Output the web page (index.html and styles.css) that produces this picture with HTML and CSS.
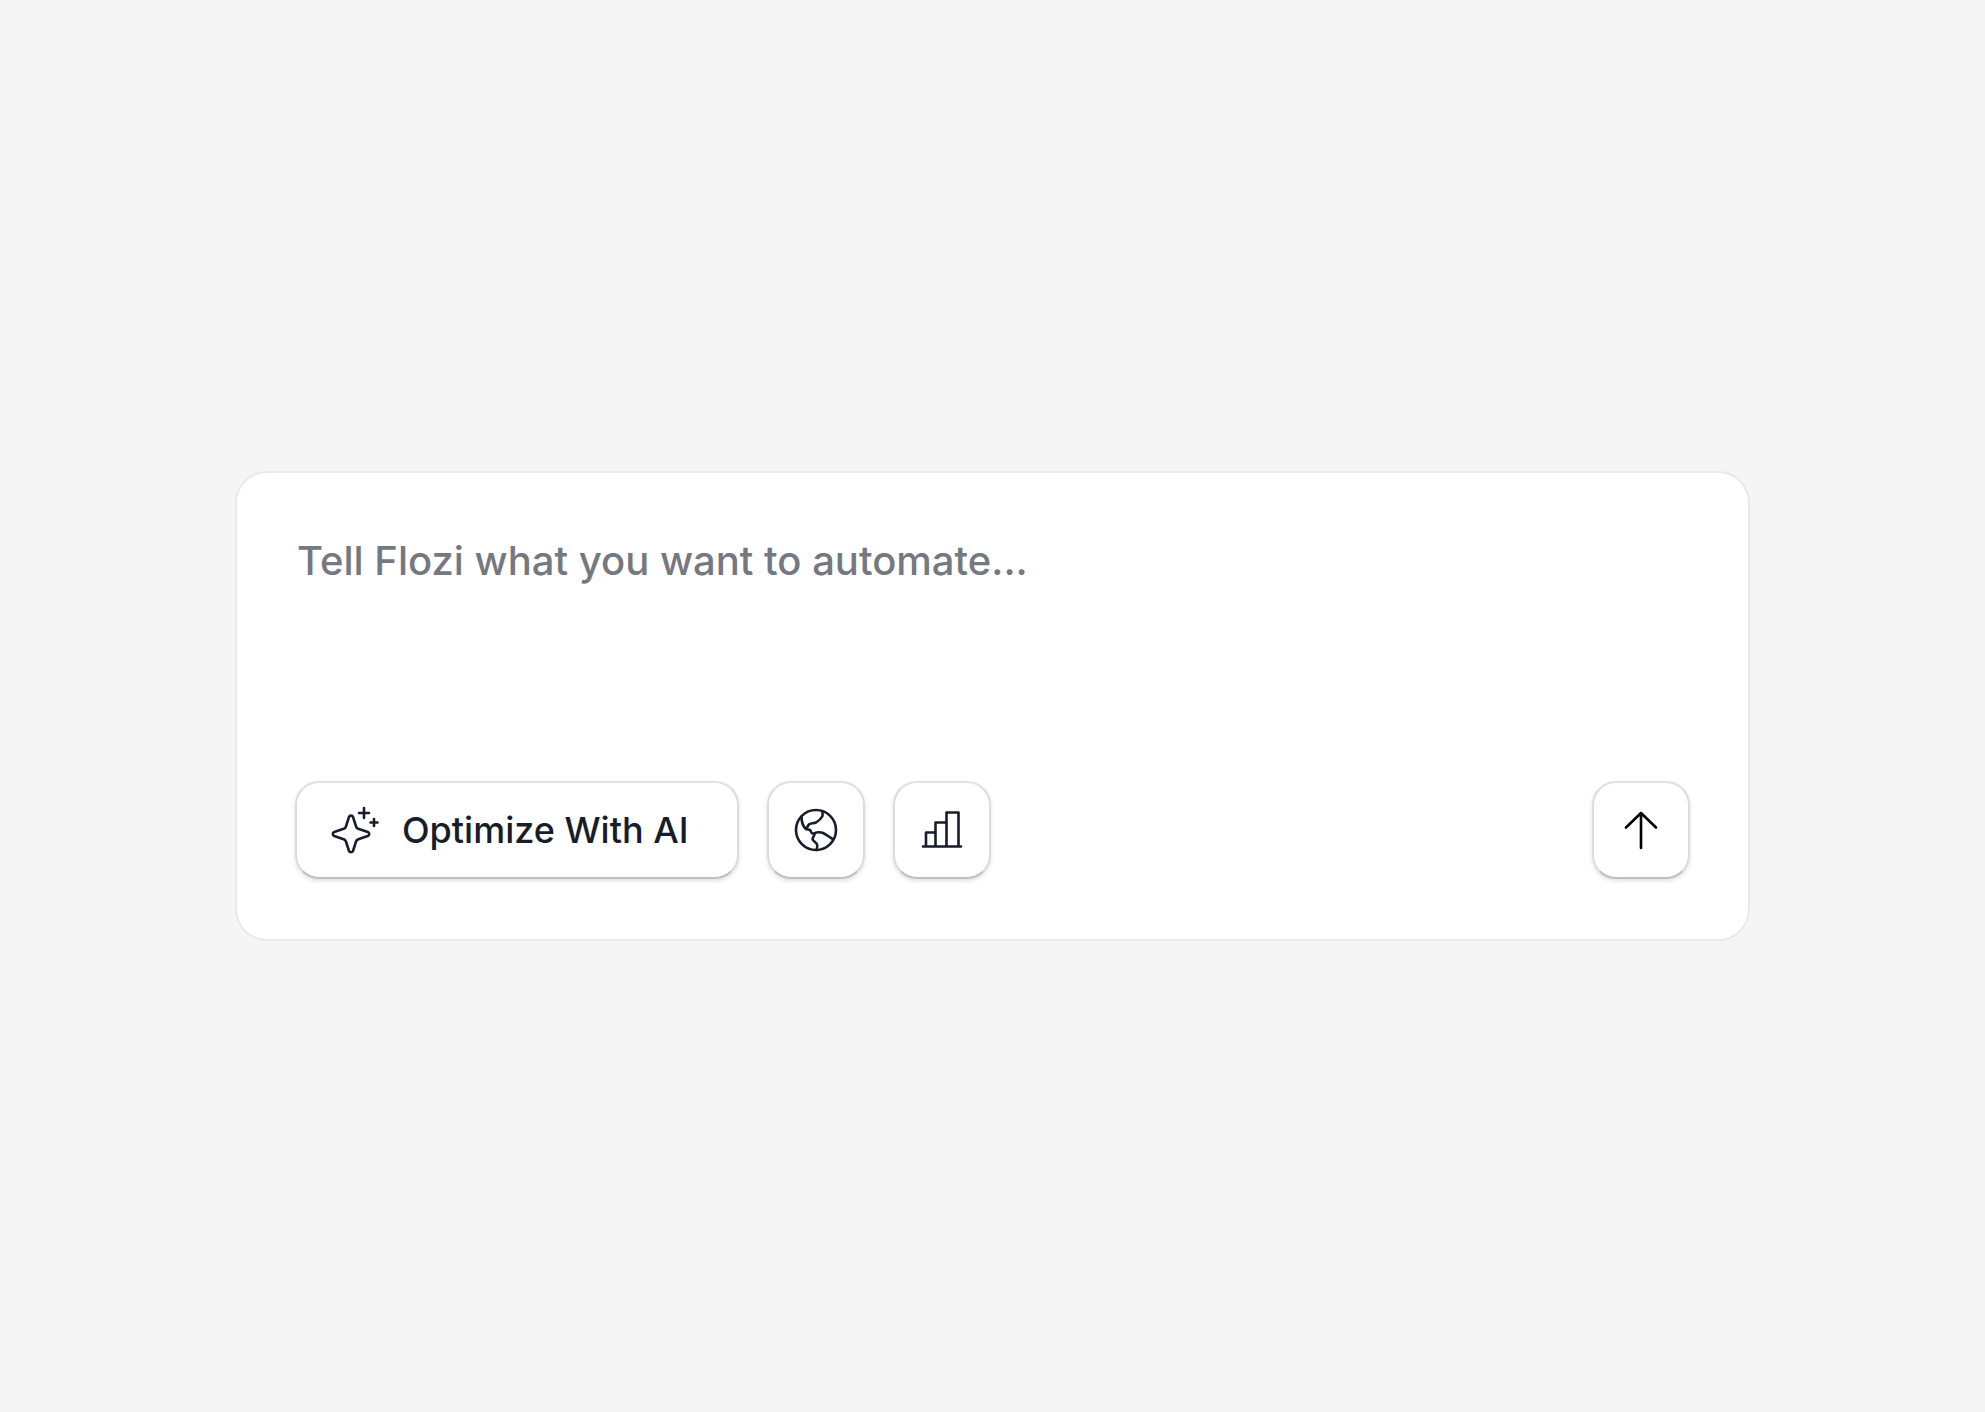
FILE: index.html
```html
<!DOCTYPE html>
<html lang="en">
<head>
  <meta charset="UTF-8" />
  <meta name="viewport" content="width=device-width, initial-scale=1.0" />
  <title>Flozi</title>
  <link rel="stylesheet" href="styles.css">
</head>
<body>
  <form class="prompt-card">
    <textarea class="prompt-input" aria-label="Prompt" placeholder="Tell Flozi what you want to automate..."></textarea>

    <div class="toolbar">
      <button type="button" class="btn btn-optimize">
        <svg class="icon-sparkle" viewBox="0 0 48 48" aria-hidden="true">
          <path d="M18 10.8C18.7 9.2 21.3 9.2 22 10.8L24.9 20C25.3 21.8 26.2 22.700 28 23.100L36.800 26C38.700 26.700 38.700 29.300 36.800 30L28 32.900C26.200 33.300 25.300 34.200 24.900 36L22 45C21.300 46.600 18.700 46.600 18 45L15.100 36C14.700 34.200 13.800 33.300 12 32.900L3.200 30C1.300 29.300 1.300 26.700 3.200 26L12 23.100C13.800 22.700 14.700 21.800 15.100 20Z" />
          <path d="M33 2V12M28 7H38M43 13V20M39.5 16.5H46.5" />
        </svg>
        <span>Optimize With AI</span>
      </button>

      <button type="button" class="btn btn-icon" aria-label="Web search">
        <svg class="icon" viewBox="0 0 44 44" aria-hidden="true">
          <circle cx="22" cy="22" r="20" />
          <path d="M28 3C29 5 29 6 28.5 8C27 11 24.5 13 22 14.5C20 15.5 17 15 15.5 16C13.5 17.5 13.5 19.5 12 21C9 18.5 7.500 14.5 7.5 8.5" />
          <path d="M12 21L16 22C17 23 17 25 18.5 25.5H20.5C21.5 24 24 24 27.5 24.5C31 25.5 34 28 38.5 31" />
          <path d="M20.5 25.5C21 28 18.5 29 18.5 31C19 33.5 22.5 34 23.2 37C23.5 39 23 40.5 22.5 42" />
        </svg>
      </button>

      <button type="button" class="btn btn-icon" aria-label="Chart">
        <svg class="icon" viewBox="0 0 44 44" aria-hidden="true">
          <path d="M3 38.5H41M6 38V24.5H15.5M15.5 38V14.5H26.5M26.5 38V4.5H38.5V38" />
        </svg>
      </button>

      <button type="submit" class="btn btn-icon btn-send" aria-label="Send">
        <svg class="icon" viewBox="0 0 44 44" aria-hidden="true">
          <path d="M22 40V5M7 19.5L22 5L37 19.5" />
        </svg>
      </button>
    </div>
  </form>
</body>
</html>
```
FILE: styles.css
```css
:root {
  --bg-color: #f5f5f5;
  --card-bg: #fff;
  --card-border: #e8eaea;
  --text-color: #181d2a;
  --placeholder-color: #757880;
}

* {
  box-sizing: border-box;
}

body {
  margin: 0;
  min-height: 100vh;
  display: flex;
  align-items: center;
  justify-content: center;
  padding: 24px;
  font-family: Inter, "Liberation Sans", sans-serif;
  background: var(--bg-color);
  color: var(--text-color);
}
.prompt-card {
  width: 100%;
  max-width: 1515px;
  padding: 60px 58px;
  background: var(--card-bg);
  border: 2px solid var(--card-border);
  border-radius: 32px;
}
.prompt-input {
  display: block;
  width: 100%;
  height: 200px;
  margin-bottom: 48px;
  padding: 0 2px;
  border: none;
  outline: none;
  resize: none;
  background: transparent;
  font: 500 40px/56px Inter, "Liberation Sans", sans-serif;
  color: var(--text-color);
}
.prompt-input::placeholder {
  color: var(--placeholder-color);
  opacity: 1;
}
.toolbar {
  display: flex;
  align-items: flex-start;
  gap: 28px;
}
.btn {
  display: flex;
  align-items: center;
  justify-content: center;
  height: 98px;
  background: #fff;
  border: 2px solid #dcdcdc;
  border-top-color: #e2e2e2;
  border-bottom-color: #c0c0c0;
  border-radius: 24px;
  box-shadow: 0 2px 4px rgba(0, 0, 0, 0.12);
  color: var(--text-color);
  cursor: pointer;
}
.btn-optimize {
  gap: 23px;
  padding: 0 48px 0 34px;
  font: 500 36px/44px Inter, "Liberation Sans", sans-serif;
}
.btn-icon {
  width: 98px;
  padding: 0;
}
.btn-send {
  margin-left: auto;
  color: #000;
}
.btn svg {
  flex: none;
  fill: none;
  stroke: currentColor;
  stroke-width: 2.6;
  stroke-linecap: round;
  stroke-linejoin: round;
}
.icon {
  width: 44px;
  height: 44px;
}
.icon-sparkle {
  width: 48px;
  height: 48px;
}
```
